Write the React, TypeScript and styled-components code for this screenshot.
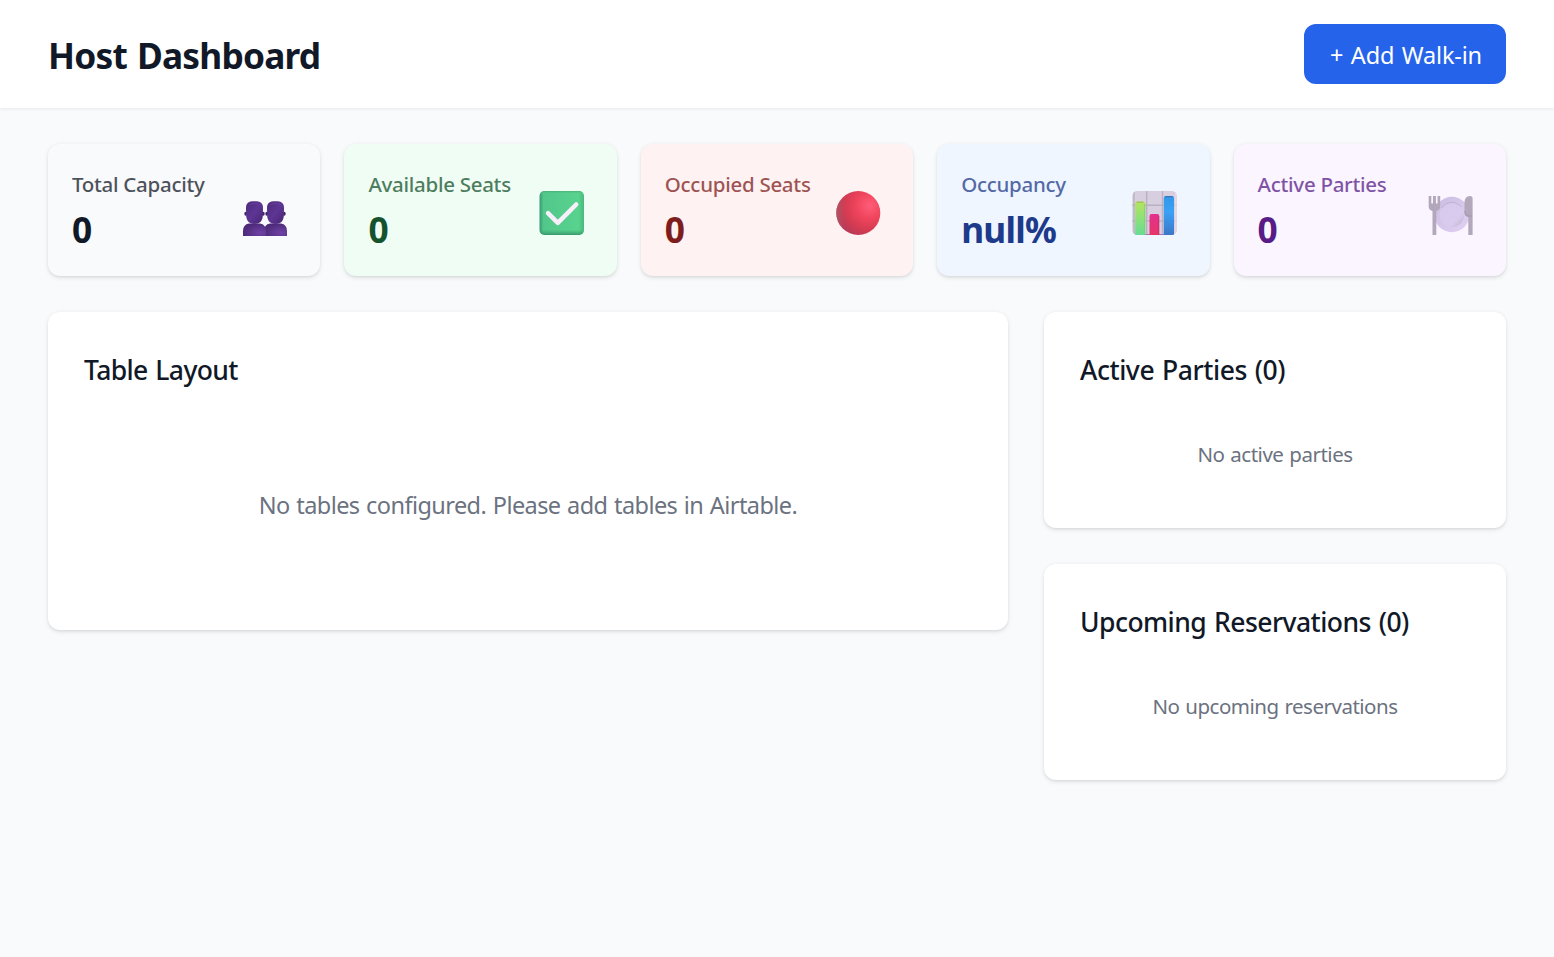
import React from "react";
import styled, { createGlobalStyle } from "styled-components";

const GlobalStyle = createGlobalStyle`
  * { box-sizing: border-box; }
  body {
    margin: 0;
    background: #f9fafb;
    color: #111827;
    font-family: "Segoe UI", "Noto Sans", "Open Sans", sans-serif;
  }
  h1, h2, p { margin: 0; }
`;

const Page = styled.div`
  min-height: 100vh;
  background: #f9fafb;
`;

const Header = styled.header`
  display: flex;
  align-items: center;
  justify-content: space-between;
  height: 108px;
  padding: 0 48px;
  background: #fff;
  box-shadow: 0 1.5px 3px rgba(0, 0, 0, 0.06);
`;

const Title = styled.h1`
  font-size: 35.3px;
  line-height: 54px;
  font-weight: 700;
  padding-top: 2px;
  letter-spacing: -0.78px;
  word-spacing: 1.5px;
  white-space: nowrap;
`;

const AddButton = styled.button`
  width: 202px;
  height: 60px;
  padding: 2px 0 0 2px;
  border: 0;
  border-radius: 12px;
  background: #2563eb;
  color: #fff;
  font-family: inherit;
  font-size: 23.5px;
  line-height: 36px;
  letter-spacing: -0.15px;
  word-spacing: 1.5px;
  white-space: nowrap;
`;

const Main = styled.main`
  display: flex;
  flex-direction: column;
  gap: 36px;
  padding: 36px 48px;
`;

const StatGrid = styled.section`
  display: grid;
  grid-template-columns: repeat(5, minmax(0, 1fr));
  gap: 24px;
`;

const cardShadow = "0 1.5px 4.5px rgba(0, 0, 0, 0.1), 0 1.5px 3px -1.5px rgba(0, 0, 0, 0.1)";

const StatCard = styled.article<{ $bg: string; $color: string }>`
  display: flex;
  align-items: center;
  justify-content: space-between;
  height: 132px;
  padding: 24px;
  border-radius: 12px;
  background: ${(p) => p.$bg};
  color: ${(p) => p.$color};
  box-shadow: ${cardShadow};
`;

const StatLabel = styled.p`
  padding-top: 2px;
  font-size: 20.5px;
  line-height: 28px;
  font-weight: 500;
  letter-spacing: -0.28px;
  opacity: 0.75;
  white-space: nowrap;
`;

const StatValue = styled.p`
  margin-top: 6px;
  padding-top: 2px;
  font-size: 35.3px;
  line-height: 46px;
  font-weight: 700;
  letter-spacing: -0.8px;
`;

const Icon = styled.svg`
  flex: none;
  width: 45px;
  height: 45px;
  margin: 7px 8.5px 0 0;
`;

const Columns = styled.div`
  display: grid;
  grid-template-columns: 960px 462px;
  gap: 36px;
  align-items: start;
`;

const SideColumn = styled.div`
  display: grid;
  gap: 36px;
`;

const Panel = styled.section`
  padding: 36px;
  border-radius: 12px;
  background: #fff;
  box-shadow: ${cardShadow};
`;

const PanelTitle = styled.h2<{ $spacing: number }>`
  margin-bottom: 24px;
  padding-top: 3px;
  font-size: 26.5px;
  line-height: 39px;
  font-weight: 500;
  letter-spacing: ${(p) => p.$spacing}px;
  word-spacing: 1.5px;
`;

const Empty = styled.p<{ $large?: boolean; $spacing: number }>`
  padding: ${(p) => (p.$large ? "74px 0 72px" : "26px 0 24px")};
  color: #6b7280;
  text-align: center;
  font-size: ${(p) => (p.$large ? 23.5 : 20.5)}px;
  line-height: ${(p) => (p.$large ? 34 : 28)}px;
  letter-spacing: ${(p) => p.$spacing}px;
  word-spacing: 1px;
`;

const PeopleIcon = () => (
  <Icon viewBox="0 0 45 45">
    <defs>
      <linearGradient id="head" x1="0" y1="0" x2="1" y2="1">
        <stop offset="0" stopColor="#4c2b7c" />
        <stop offset=".5" stopColor="#5d3594" />
        <stop offset="1" stopColor="#482572" />
      </linearGradient>
      <radialGradient id="bust" cx=".75" cy=".75" r=".75">
        <stop offset="0" stopColor="#7042a6" />
        <stop offset="1" stopColor="#4d2b79" />
      </radialGradient>
    </defs>
    {[21, 0].map((x) => (
      <g key={x} transform={`translate(${x} 0)`}>
        <ellipse cx="2.8" cy="22.800" rx="1.500" ry="2" fill="#43216c" />
        <ellipse cx="20.2" cy="22.800" rx="1.500" ry="2" fill="#43216c" />
        <path d="M0 45v-5q0-6.500 6-7.500h11q6 1 6 7.500V45Z" fill="url(#bust)" />
        <path d="M3 17C3 12 5.500 10.300 11.500 10.300S20 12 20 17L19.800 25C19.500 30 16.500 33 11.500 33S3.500 30 3.200 25Z" fill="url(#head)" />
        <path d="M6.500 13.500q5-2.500 10 0" fill="none" stroke="#6a42a0" strokeWidth=".7" />
      </g>
    ))}
  </Icon>
);

const CheckIcon = () => (
  <Icon viewBox="0 0 45 45">
    <defs>
      <linearGradient id="green" x1="0" x2="1">
        <stop offset="0" stopColor="#389a72" />
        <stop offset=".09" stopColor="#52c78b" />
        <stop offset=".88" stopColor="#58d38e" />
        <stop offset="1" stopColor="#4bb77d" />
      </linearGradient>
      <linearGradient id="greenEdge" x1="0" y1="0" x2="0" y2="1">
        <stop offset="0" stopColor="#3e9d6b" stopOpacity=".6" />
        <stop offset=".07" stopColor="#58d38e" stopOpacity="0" />
        <stop offset=".88" stopColor="#38966c" stopOpacity="0" />
        <stop offset="1" stopColor="#2f8c65" stopOpacity=".8" />
      </linearGradient>
    </defs>
    <rect x=".5" width="44.500" height="44" rx="5" fill="url(#green)" />
    <rect x=".5" width="44.500" height="44" rx="5" fill="url(#greenEdge)" />
    <path d="M9 22.200 18.800 31.800 37.200 13.500" fill="none" stroke="#f8effb" strokeWidth="4.500" strokeLinecap="round" strokeLinejoin="round" />
  </Icon>
);

const CircleIcon = () => (
  <Icon viewBox="0 0 45 45">
    <defs>
      <radialGradient id="red" cx=".76" cy=".33" r=".78">
        <stop offset="0" stopColor="#ff5d79" />
        <stop offset=".38" stopColor="#f0455d" />
        <stop offset=".72" stopColor="#d53b51" />
        <stop offset="1" stopColor="#b63a59" />
      </radialGradient>
      <linearGradient id="redEdge">
        <stop offset="0" stopColor="#a75e66" stopOpacity=".8" />
        <stop offset=".22" stopColor="#c94b5b" stopOpacity="0" />
      </linearGradient>
    </defs>
    <circle cx="22.300" cy="22" r="22" fill="url(#red)" />
    <circle cx="22.300" cy="22" r="22" fill="url(#redEdge)" />
  </Icon>
);

const ChartIcon = () => (
  <Icon viewBox="0 0 45 45">
    <defs>
      <linearGradient id="barGreen" x1="0" y1="0" x2="0" y2="1">
        <stop offset="0" stopColor="#b6e45d" />
        <stop offset="1" stopColor="#63dc96" />
      </linearGradient>
      <linearGradient id="barPink" x1="0" y1="0" x2="0" y2="1">
        <stop offset="0" stopColor="#e33190" />
        <stop offset="1" stopColor="#e73566" />
      </linearGradient>
      <linearGradient id="barBlue" x1="0" y1="0" x2="0" y2="1">
        <stop offset="0" stopColor="#3297e8" />
        <stop offset=".4" stopColor="#3aa1f5" />
        <stop offset="1" stopColor="#3c75c5" />
      </linearGradient>
      <clipPath id="chartClip"><rect x=".3" width="44.500" height="44" rx="5" /></clipPath>
    </defs>
    <g clipPath="url(#chartClip)">
      <rect width="45" height="45" fill="#d7cfdf" />
      <path d="M2 0V45M14.700 0V45M30.500 0V45M0 14.200H45M0 30H45" stroke="#b9b1c0" strokeWidth="1.400" />
      <path d="M43.800 0V45" stroke="#e2d8ea" strokeWidth="2" />
      <path d="M0 43.500h45" stroke="#a675bb" strokeWidth="1.200" />
      <path d="M3.200 45V12.500q0-2 2-2h6q2 0 2 2V45Z" fill="url(#barGreen)" />
      <path d="M17.500 45V25q0-2 2-2h5.700q2 0 2 2V45Z" fill="url(#barPink)" />
      <path d="M31.800 45V7q0-2 2-2h6.200q2 0 2 2V45Z" fill="url(#barBlue)" />
      <path d="M4.500 11.200h7" stroke="#9ab65c" strokeWidth="1" />
      <path d="M33 5.700h7.500" stroke="#356fae" strokeWidth="1" />
      <path d="M12.700 13v32" stroke="#79cf68" strokeWidth=".8" />
      <path d="M26.700 25v20" stroke="#c62b70" strokeWidth=".8" />
    </g>
  </Icon>
);

const PlateIcon = () => (
  <Icon viewBox="-.3 0 45 45">
    <defs>
      <linearGradient id="plate" x1="0" y1="0" x2="1" y2="1">
        <stop offset="0" stopColor="#cabde0" />
        <stop offset="1" stopColor="#e1d0f4" />
      </linearGradient>
      <linearGradient id="well" x1="0" y1="0" x2="1" y2="1">
        <stop offset="0" stopColor="#d7c9eb" />
        <stop offset=".7" stopColor="#d8cbed" />
        <stop offset="1" stopColor="#bbaec9" />
      </linearGradient>
    </defs>
    <circle cx="23.600" cy="23.500" r="17.700" fill="url(#plate)" />
    <circle cx="23.600" cy="23.500" r="12.300" fill="url(#well)" />
    <path d="M13.500 17a12 12 0 0 1 19.500-1" fill="none" stroke="#b9aacb" strokeWidth=".8" />
    <path d="M.4 5h2.600v7.500h1.700V5h2.900v7.500h1.700V5h2.600v10.500q0 3.500-3.900 4.500V44H4.200V20Q.4 19 .4 15.500Z" fill="#b2a7bb" />
    <path d="M44.300 44h-4.300V26q-3.800-.5-3.800-4V12q0-7 5.500-7 2.600 0 2.600 2.500Z" fill="#b2a7bb" />
    <path d="M36.700 20q0 4.700 3.300 5h4" fill="none" stroke="#9f91ac" strokeWidth=".8" />
  </Icon>
);

const stats = [
  { label: "Total Capacity", value: "0", bg: "#f9fafb", color: "#111827", icon: <PeopleIcon /> },
  { label: "Available Seats", value: "0", bg: "#f0fdf4", color: "#14532d", icon: <CheckIcon /> },
  { label: "Occupied Seats", value: "0", bg: "#fef2f2", color: "#7f1d1d", icon: <CircleIcon /> },
  { label: "Occupancy", value: "null%", bg: "#eff6ff", color: "#1e3a8a", icon: <ChartIcon /> },
  { label: "Active Parties", value: "0", bg: "#faf5ff", color: "#581c87", icon: <PlateIcon /> },
];

export default function App() {
  return (
    <Page>
      <GlobalStyle />
      <Header>
        <Title>Host Dashboard</Title>
        <AddButton>+ Add Walk-in</AddButton>
      </Header>
      <Main>
        <StatGrid>
          {stats.map((s) => (
            <StatCard key={s.label} $bg={s.bg} $color={s.color}>
              <div>
                <StatLabel>{s.label}</StatLabel>
                <StatValue>{s.value}</StatValue>
              </div>
              {s.icon}
            </StatCard>
          ))}
        </StatGrid>
        <Columns>
          <Panel>
            <PanelTitle $spacing={-0.63}>Table Layout</PanelTitle>
            <Empty $large $spacing={-0.57}>No tables configured. Please add tables in Airtable.</Empty>
          </Panel>
          <SideColumn>
            <Panel>
              <PanelTitle $spacing={-0.45}>Active Parties (0)</PanelTitle>
              <Empty $spacing={-0.48}>No active parties</Empty>
            </Panel>
            <Panel>
              <PanelTitle $spacing={-0.54}>Upcoming Reservations (0)</PanelTitle>
              <Empty $spacing={-0.49}>No upcoming reservations</Empty>
            </Panel>
          </SideColumn>
        </Columns>
      </Main>
    </Page>
  );
}
